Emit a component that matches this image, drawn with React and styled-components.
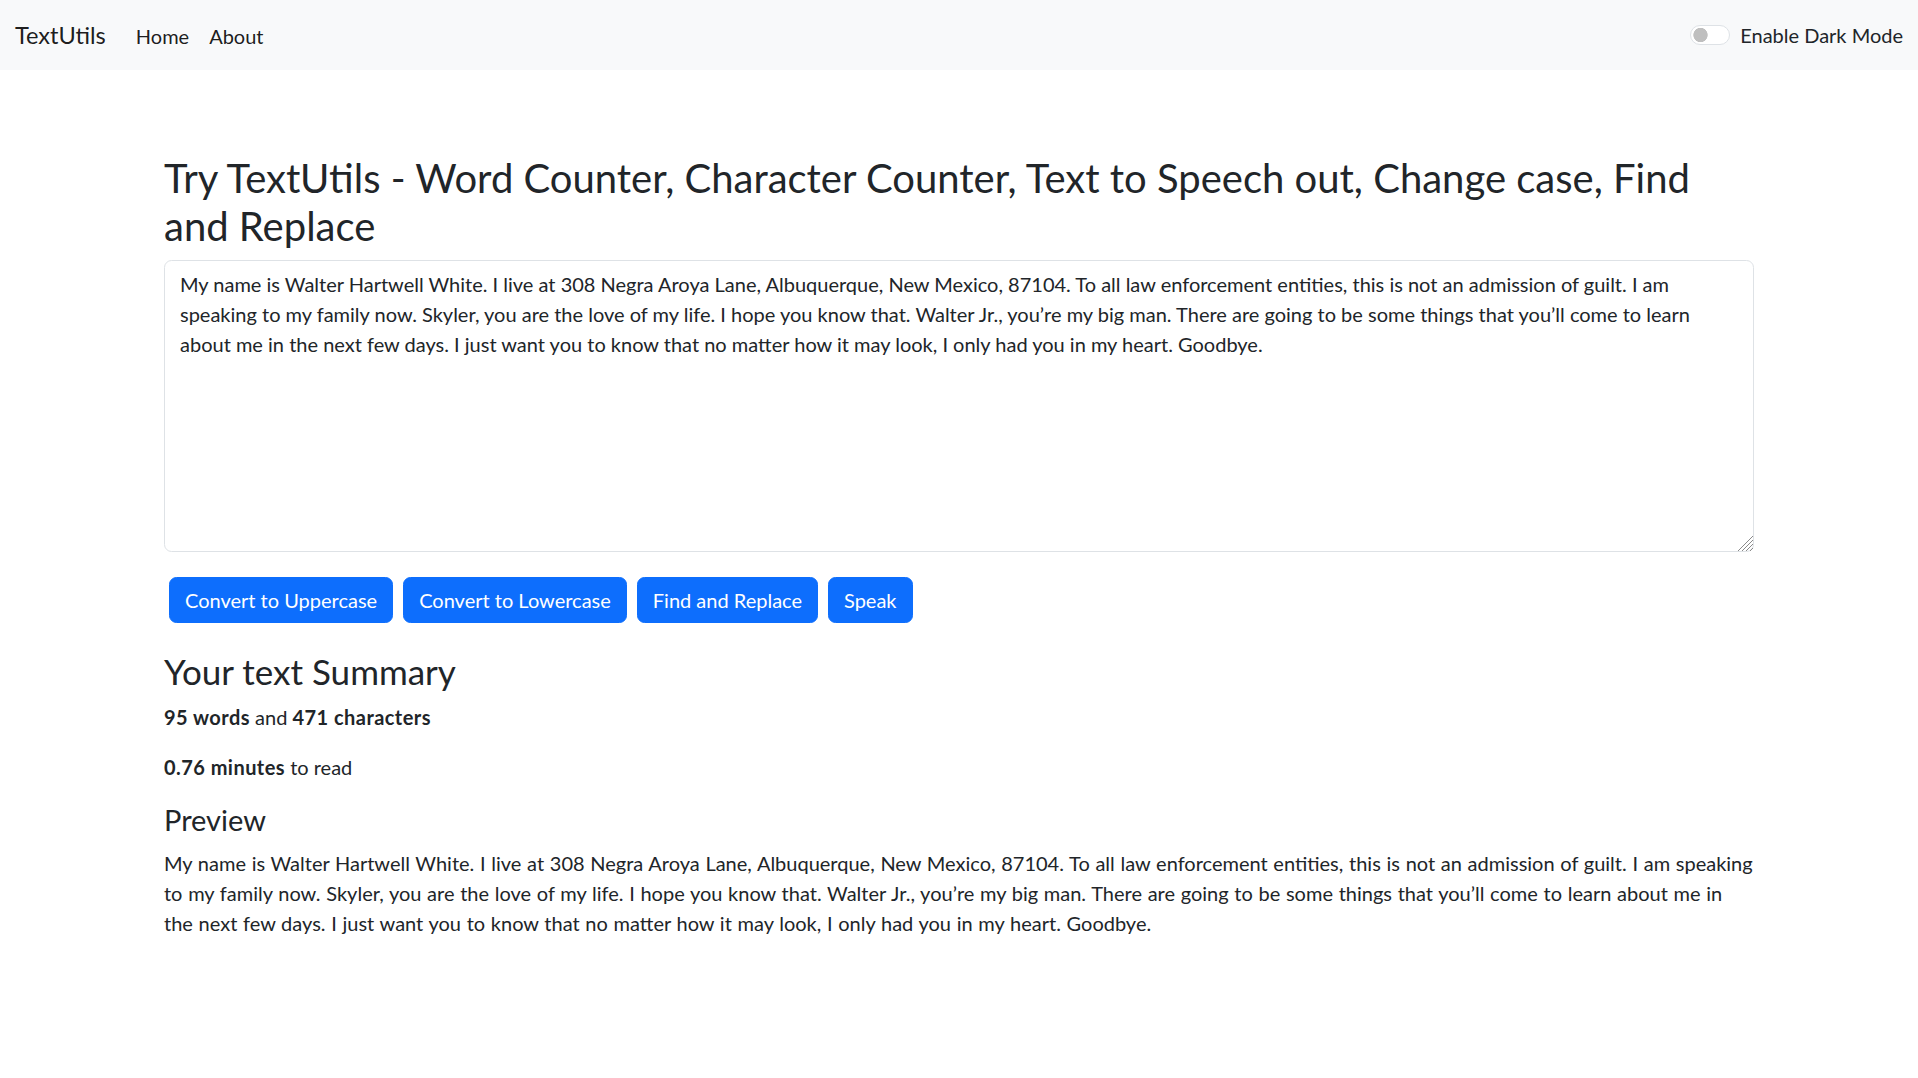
import React, { useState } from "react";
import styled, { createGlobalStyle } from "styled-components";

const GlobalStyle = createGlobalStyle`
  *, *::before, *::after { box-sizing: border-box; }
  body {
    margin: 0;
    font-family: Lato, "Open Sans", sans-serif;
    font-size: 20px;
    line-height: 30px;
    color: #212529;
    background: #ffffff;
  }
`;

const Navbar = styled.nav`
  display: flex;
  align-items: center;
  justify-content: space-between;
  height: 70px;
  padding: 0 15px;
  background: #f8f9fa;
`;

const NavLeft = styled.div`
  display: flex;
  align-items: center;
`;

const Brand = styled.a`
  font-size: 23.6px;
  line-height: 37.5px;
  color: rgba(0, 0, 0, 0.9);
  text-decoration: none;
  margin-right: 20px;
  padding-top: 2px;
`;

const NavLink = styled.a`
  font-size: 20px;
  line-height: 30px;
  padding: 12px 10px 10px;
  color: rgba(0, 0, 0, 0.9);
  text-decoration: none;
`;

const SwitchWrap = styled.label`
  display: flex;
  align-items: center;
  gap: 10px;
  font-size: 20px;
  line-height: 30px;
  color: #212529;
`;

const Switch = styled.input`
  appearance: none;
  -webkit-appearance: none;
  margin: 0;
  width: 40px;
  height: 20px;
  border: 1px solid #dee2e6;
  border-radius: 10px;
  background-color: #fff;
  background-image: radial-gradient(
    circle 7.5px at ${(p) => (p.checked ? "28px" : "9.5px")} 50%,
    ${(p) => (p.checked ? "#ffffff" : "#bfbfbf")} 6.8px,
    transparent 7.5px
  );
  ${(p) => p.checked && "background-color: #0d6efd; border-color: #0d6efd;"}
`;

const Main = styled.main`
  width: 1590px;
  margin: 0 auto;
  padding-top: 84px;
`;

const Heading = styled.h1`
  margin: 0 0 10px;
  font-size: 40px;
  line-height: 48px;
  font-weight: 400;
`;

const TextArea = styled.textarea`
  display: block;
  width: 100%;
  height: 292px;
  margin: 0;
  padding: 7.5px 15px;
  font-family: Lato, "Open Sans", sans-serif;
  font-size: 20px;
  line-height: 30px;
  color: #212529;
  background: #fff;
  border: 1px solid #dee2e6;
  border-radius: 7.5px;
  resize: vertical;
  outline: none;

  &::-webkit-scrollbar {
    width: 16px;
    height: 16px;
    background: transparent;
  }
  &::-webkit-resizer {
    background: linear-gradient(
      135deg,
      transparent 0 47%,
      #8a8a8a 47% 51%,
      transparent 51% 61%,
      #8a8a8a 61% 65%,
      transparent 65% 75%,
      #8a8a8a 75% 79%,
      transparent 79% 89%,
      #8a8a8a 89% 93%,
      transparent 93%
    );
  }
`;

const ButtonRow = styled.div`
  display: flex;
  flex-wrap: wrap;
  margin-top: 25px;
`;

const Button = styled.button`
  margin: 0 5px;
  padding: 7px 15px;
  font-family: Lato, "Open Sans", sans-serif;
  font-size: 20px;
  line-height: 30px;
  color: #fff;
  background: #0d6efd;
  border: 1px solid #0d6efd;
  border-radius: 7.5px;
  cursor: pointer;
`;

const Summary = styled.section`
  padding-top: 27px;
`;

const SummaryTitle = styled.h2`
  margin: 0 0 10px;
  font-size: 35px;
  line-height: 42px;
  font-weight: 400;
`;

const PreviewTitle = styled.h3`
  margin: 0 0 10px;
  font-size: 29px;
  line-height: 36px;
  font-weight: 400;
`;

const Para = styled.p`
  margin: 0 0 20px;
  font-size: 20px;
  line-height: 30px;
  word-spacing: ${(p) => (p.$preview ? "0.57px" : "normal")};
  b {
    font-weight: 700;
    letter-spacing: 0.45px;
  }
`;

const initial =
  "My name is Walter Hartwell White. I live at 308 Negra Aroya Lane, Albuquerque, New Mexico, 87104. To all law enforcement entities, this is not an admission of guilt. I am speaking to my family now. Skyler, you are the love of my life. I hope you know that. Walter Jr., you’re my big man. There are going to be some things that you’ll come to learn about me in the next few days. I just want you to know that no matter how it may look, I only had you in my heart. Goodbye.";

export default function App() {
  const [text, setText] = useState(initial);
  const [dark, setDark] = useState(false);
  const words = text.split(/\s+/).filter((w) => w.length).length;

  return (
    <>
      <GlobalStyle />
      <Navbar>
        <NavLeft>
          <Brand href="#">TextUtils</Brand>
          <NavLink href="#">Home</NavLink>
          <NavLink href="#">About</NavLink>
        </NavLeft>
        <SwitchWrap>
          <Switch type="checkbox" checked={dark} onChange={() => setDark(!dark)} />
          Enable Dark Mode
        </SwitchWrap>
      </Navbar>
      <Main>
        <Heading>
          Try TextUtils - Word Counter, Character Counter, Text to Speech out, Change case, Find and Replace
        </Heading>
        <TextArea value={text} onChange={(e) => setText(e.target.value)} spellCheck={false} />
        <ButtonRow>
          <Button onClick={() => setText(text.toUpperCase())}>Convert to Uppercase</Button>
          <Button onClick={() => setText(text.toLowerCase())}>Convert to Lowercase</Button>
          <Button>Find and Replace</Button>
          <Button>Speak</Button>
        </ButtonRow>
        <Summary>
          <SummaryTitle>Your text Summary</SummaryTitle>
          <Para>
            <b>{words} words</b> and <b>{text.length} characters</b>
          </Para>
          <Para>
            <b>{(0.008 * words).toFixed(2)} minutes</b> to read
          </Para>
          <PreviewTitle>Preview</PreviewTitle>
          <Para $preview>{text}</Para>
        </Summary>
      </Main>
    </>
  );
}
